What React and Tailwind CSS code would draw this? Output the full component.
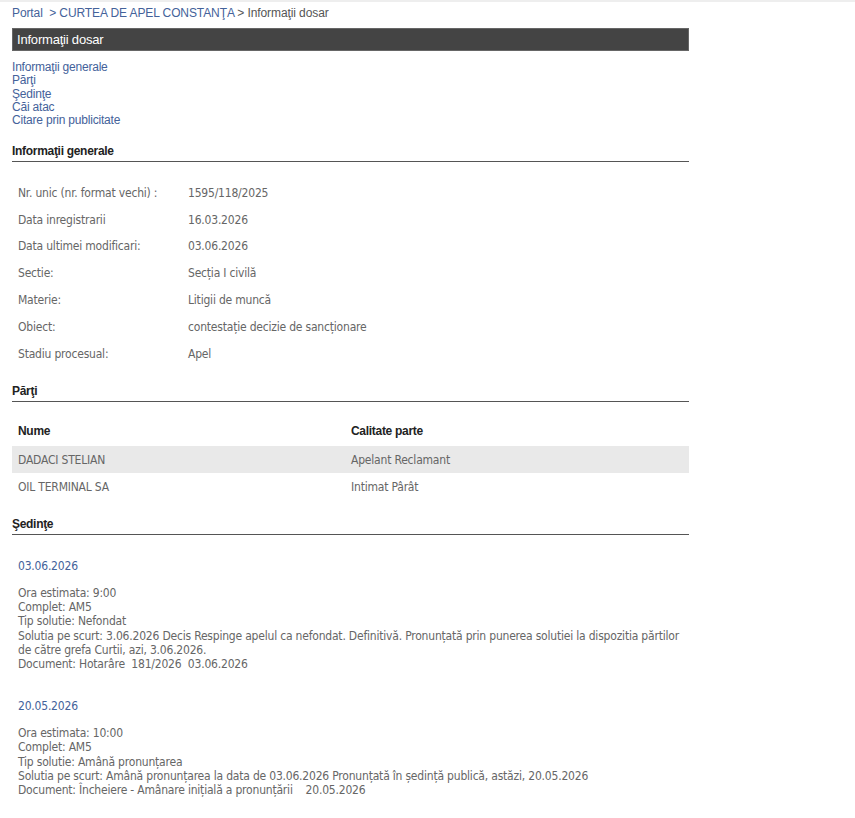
import React from "react";

const info = [
  ["Nr. unic (nr. format vechi) :", "1595/118/2025"],
  ["Data inregistrarii", "16.03.2026"],
  ["Data ultimei modificari:", "03.06.2026"],
  ["Sectie:", "Secția I civilă"],
  ["Materie:", "Litigii de muncă"],
  ["Obiect:", "contestație decizie de sancționare"],
  ["Stadiu procesual:", "Apel"],
];

const parti = [
  ["DADACI STELIAN", "Apelant Reclamant"],
  ["OIL TERMINAL SA", "Intimat Pârât"],
];

const sedinte = [
  {
    date: "03.06.2026",
    lines: [
      "Ora estimata: 9:00",
      "Complet: AM5",
      "Tip solutie: Nefondat",
      "Solutia pe scurt: 3.06.2026 Decis Respinge apelul ca nefondat. Definitivă. Pronunțată prin punerea solutiei la dispozitia părtilor de către grefa Curtii, azi, 3.06.2026.",
      "Document: Hotarâre\u00a0 181/2026\u00a0 03.06.2026",
    ],
  },
  {
    date: "20.05.2026",
    lines: [
      "Ora estimata: 10:00",
      "Complet: AM5",
      "Tip solutie: Amână pronunțarea",
      "Solutia pe scurt: Amână pronunțarea la data de 03.06.2026 Pronunțată în ședință publică, astăzi, 20.05.2026",
      "Document: Încheiere - Amânare inițială a pronunțării\u00a0\u00a0\u00a0 20.05.2026",
    ],
  },
];

const body = "font-['DejaVu_Sans_Condensed','DejaVu_Sans',sans-serif] text-[12px] tracking-[-0.2px] text-[#666]";

function Heading({ children }) {
  return (
    <div className="border-b border-[#555] pb-[1px] font-['Liberation_Sans',Arial,sans-serif] text-[12px] font-bold tracking-[-0.3px] text-[#222]">
      {children}
    </div>
  );
}

export default function App() {
  return (
    <div className="min-h-[818px] border-t-2 border-[#eee] bg-white pl-3 font-['Liberation_Sans',Arial,sans-serif]">
      <div className="w-[677px]">
        {/* breadcrumb */}
        <div className="pt-[2px] text-[12px] tracking-[-0.1px] text-[#555]">
          <span className="text-[#44629a]">Portal</span>
          <span className="text-[#44629a]">{"\u00a0 > CURTEA DE APEL CONSTANŢA"}</span>
          <span>{" > Informaţii dosar"}</span>
        </div>

        <div className="mt-[6px] h-[23px] border border-[#666] bg-[#444] pl-1 text-[13px] leading-[21px] tracking-[-0.2px] text-white">
          Informaţii dosar
        </div>

        <div className="mt-[10px] flex flex-col text-[12px] leading-[13.3px] tracking-[-0.2px] text-[#44629a]">
          <a>Informaţii generale</a>
          <a>Părţi</a>
          <a>Şedinţe</a>
          <a>Căi atac</a>
          <a>Citare prin publicitate</a>
        </div>

        <div className="mt-[15px]">
          <Heading>Informaţii generale</Heading>
        </div>
        <div className={`mt-[17px] ${body}`}>
          {info.map(([k, v]) => (
            <div key={k} className="flex h-[26.8px] items-center pl-[6px]">
              <span className="w-[170px]">{k}</span>
              <span>{v}</span>
            </div>
          ))}
        </div>

        <div className="mt-[15px]">
          <Heading>Părţi</Heading>
        </div>
        <div className="mt-[14px]">
          <div className="flex h-[30px] items-center pl-[6px] font-['Liberation_Sans',Arial,sans-serif] text-[12px] font-bold tracking-[-0.3px] text-[#222]">
            <span className="w-[333px]">Nume</span>
            <span>Calitate parte</span>
          </div>
          {parti.map(([n, c], i) => (
            <div
              key={n}
              className={`flex h-[27px] items-center pl-[6px] ${body} ${i === 0 ? "bg-[#e9e9e9]" : ""}`}
            >
              <span className="w-[333px]">{n}</span>
              <span>{c}</span>
            </div>
          ))}
        </div>

        <div className="mt-[15px]">
          <Heading>Şedinţe</Heading>
        </div>
        <div className={`flex flex-col gap-[26px] pl-[6px] pt-[22px] ${body}`}>
          {sedinte.map((s) => (
            <div key={s.date}>
              <div className="text-[#44629a]">{s.date}</div>
              <div className="mt-[11px] leading-[14.2px]">
                {s.lines.map((l) => (
                  <div key={l}>{l}</div>
                ))}
              </div>
            </div>
          ))}
        </div>
      </div>
    </div>
  );
}
